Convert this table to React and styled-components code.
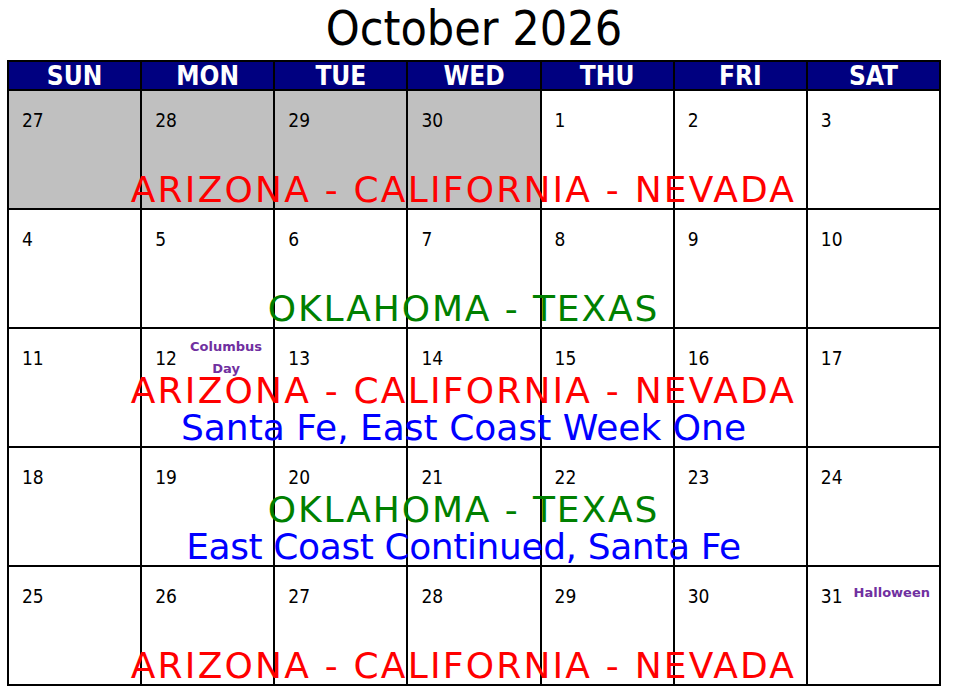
import React from "react";
import styled, { createGlobalStyle } from "styled-components";

const GlobalStyle = createGlobalStyle`
  html, body {
    margin: 0;
    padding: 0;
    background: #ffffff;
  }
  body {
    font-family: "DejaVu Sans", sans-serif;
  }
`;

const Page = styled.div`
  width: 959px;
  padding-left: 7px;
  box-sizing: border-box;
`;

const Title = styled.h1`
  margin: 0;
  width: 934px;
  height: 60px;
  line-height: 57px;
  text-align: center;
  font-family: "DejaVu Sans Condensed", "DejaVu Sans", sans-serif;
  font-stretch: condensed;
  font-weight: normal;
  font-size: 48px;
  color: #000000;
`;

const Calendar = styled.div`
  width: 934px;
  box-sizing: border-box;
  border-left: 2px solid #000;
  border-top: 2px solid #000;
`;

const HeaderRow = styled.div`
  display: grid;
  grid-template-columns: repeat(7, minmax(0, 1fr));
  border-bottom: 2px solid #000;
  background: #000080;
`;

const HeaderCell = styled.div`
  height: 27px;
  line-height: 28px;
  border-right: 2px solid #000;
  text-align: center;
  color: #ffffff;
  font-family: "DejaVu Sans Condensed", "DejaVu Sans", sans-serif;
  font-stretch: condensed;
  font-weight: bold;
  font-size: 26px;
`;

const WeekRow = styled.div`
  display: grid;
  grid-template-columns: repeat(7, minmax(0, 1fr));
  grid-template-rows: minmax(0, 1fr);
  height: 119px;
  box-sizing: border-box;
  border-bottom: 2px solid #000;
`;

const DayCell = styled.div`
  grid-row: 1;
  grid-column: ${(p) => p.$col};
  border-right: 2px solid #000;
  background: ${(p) => (p.$muted ? "#c0c0c0" : "#ffffff")};
  min-width: 0;
`;

const CellHeader = styled.div`
  display: flex;
  align-items: center;
  height: 44px;
  margin-top: 7px;
  padding-left: 13px;
`;

const DayNumber = styled.span`
  font-family: "DejaVu Sans Condensed", "DejaVu Sans", sans-serif;
  font-stretch: condensed;
  font-size: 19px;
  line-height: 22px;
  color: #000;
`;

const HolidaySlot = styled.div`
  flex: 1;
  display: flex;
  justify-content: center;
  padding-left: 2px;
`;

const Holiday = styled.span`
  width: min-content;
  text-align: center;
  font-family: "Comic Sans MS", "DejaVu Sans", sans-serif;
  font-weight: bold;
  font-size: 13px;
  line-height: 22px;
  color: #7030a0;
  transform: translateY(${(p) => p.$lift}px);
`;

const EventLayer = styled.div`
  grid-row: 1;
  grid-column: 1 / -1;
  min-width: 0;
  z-index: 1;
  pointer-events: none;
  display: flex;
  flex-direction: column;
  justify-content: flex-end;
  align-items: center;
  padding-right: 23px;
`;

const EventLine = styled.div`
  font-family: "Comic Sans MS", "DejaVu Sans", sans-serif;
  font-size: 36px;
  line-height: 37px;
  white-space: nowrap;
  letter-spacing: ${(p) => p.$spacing}px;
  color: ${(p) => p.$color};
`;

const RED = "#ff0000";
const GREEN = "#008000";
const BLUE = "#0000ff";

const AZ = { text: "ARIZONA - CALIFORNIA - NEVADA", color: RED, spacing: 2.2 };
const OK = { text: "OKLAHOMA - TEXAS", color: GREEN, spacing: 1.9 };

const weeks = [
  {
    days: [
      { n: 27, muted: true },
      { n: 28, muted: true },
      { n: 29, muted: true },
      { n: 30, muted: true },
      { n: 1 },
      { n: 2 },
      { n: 3 },
    ],
    events: [AZ],
  },
  {
    days: [{ n: 4 }, { n: 5 }, { n: 6 }, { n: 7 }, { n: 8 }, { n: 9 }, { n: 10 }],
    events: [OK],
  },
  {
    days: [
      { n: 11 },
      { n: 12, holiday: "Columbus Day", lift: 0 },
      { n: 13 },
      { n: 14 },
      { n: 15 },
      { n: 16 },
      { n: 17 },
    ],
    events: [AZ, { text: "Santa Fe, East Coast Week One", color: BLUE, spacing: 0 }],
  },
  {
    days: [{ n: 18 }, { n: 19 }, { n: 20 }, { n: 21 }, { n: 22 }, { n: 23 }, { n: 24 }],
    events: [OK, { text: "East Coast Continued, Santa Fe", color: BLUE, spacing: -0.4 }],
  },
  {
    days: [
      { n: 25 },
      { n: 26 },
      { n: 27 },
      { n: 28 },
      { n: 29 },
      { n: 30 },
      { n: 31, holiday: "Halloween", lift: -3 },
    ],
    events: [AZ],
  },
];

const dayNames = ["SUN", "MON", "TUE", "WED", "THU", "FRI", "SAT"];

export default function App() {
  return (
    <>
      <GlobalStyle />
      <Page>
        <Title>October 2026</Title>
        <Calendar>
          <HeaderRow>
            {dayNames.map((d) => (
              <HeaderCell key={d}>{d}</HeaderCell>
            ))}
          </HeaderRow>
          {weeks.map((w, wi) => (
            <WeekRow key={wi}>
              {w.days.map((d, di) => (
                <DayCell key={di} $col={di + 1} $muted={d.muted}>
                  <CellHeader>
                    <DayNumber>{d.n}</DayNumber>
                    {d.holiday && (
                      <HolidaySlot>
                        <Holiday $lift={d.lift}>{d.holiday}</Holiday>
                      </HolidaySlot>
                    )}
                  </CellHeader>
                </DayCell>
              ))}
              <EventLayer>
                {w.events.map((e, ei) => (
                  <EventLine key={ei} $color={e.color} $spacing={e.spacing}>
                    {e.text}
                  </EventLine>
                ))}
              </EventLayer>
            </WeekRow>
          ))}
        </Calendar>
      </Page>
    </>
  );
}
